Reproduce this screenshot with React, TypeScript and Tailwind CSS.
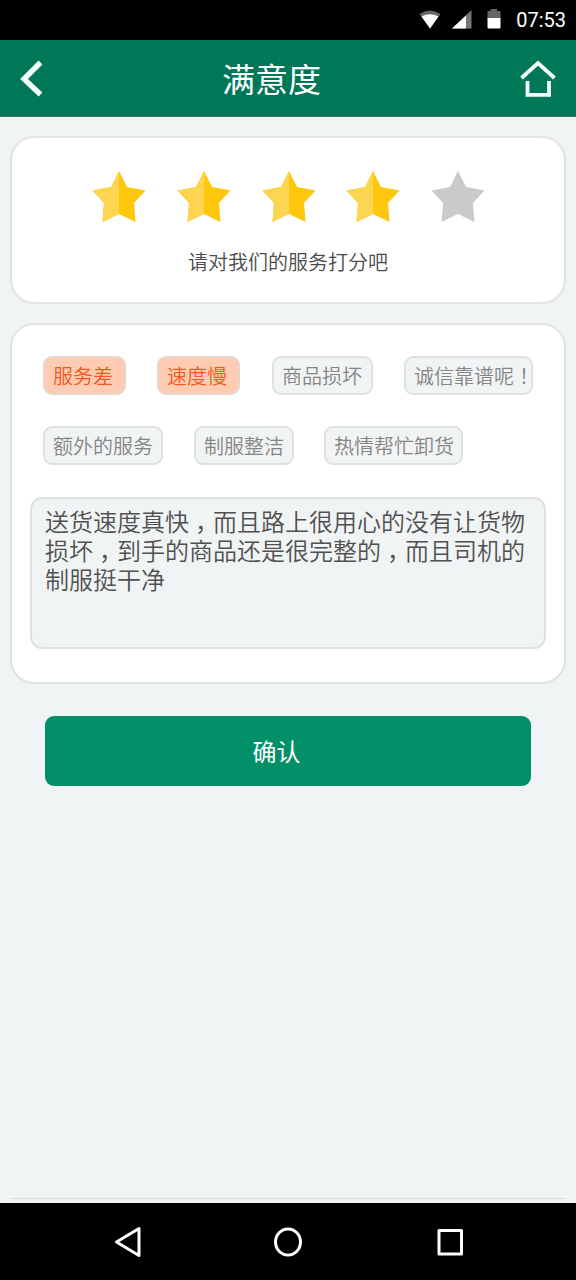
import React from 'react';

interface Tag {
  label: string;
  active?: boolean;
  className: string;
}

const tagRows: Tag[][] = [
  [
    { label: '服务差', active: true, className: 'w-[83px]' },
    { label: '速度慢', active: true, className: 'w-[83px] ml-[31px]' },
    { label: '商品损坏', className: 'w-[101px] ml-8' },
    { label: '诚信靠谱呢！', className: 'w-[129px] ml-[31px]' },
  ],
  [
    { label: '额外的服务', className: 'w-[120px]' },
    { label: '制服整洁', className: 'w-[100px] ml-[31px]' },
    { label: '热情帮忙卸货', className: 'w-[139px] ml-[30px]' },
  ],
];

const comment = '送货速度真快，而且路上很用心的没有让货物损坏，到手的商品还是很完整的，而且司机的制服挺干净';

// Half-width punctuation centred in a full-width cell
const CenteredText: React.FC<{ text: string }> = ({ text }) => (
  <>
    {text.split(/([，！])/).map((part, index) =>
      part === '，' || part === '！' ? (
        <span key={index} className="px-[0.25em] [font-feature-settings:'halt']">
          {part}
        </span>
      ) : (
        part
      )
    )}
  </>
);

const StatusBar = () => (
  <div className="h-10 bg-black flex items-center justify-end pr-[10px] text-white">
    <svg width="22" height="20" viewBox="0 0 22 20" className="mr-[11px]">
      <path d="M0.500 4Q11-3 21.500 4L11 18.500Z" fill="#666" />
      <path d="M2.500 6.500Q11 2 19.500 6.500L11 18.500Z" fill="#fff" />
    </svg>
    <svg width="20" height="20" viewBox="0 0 20 20" className="mr-[15px]">
      <path d="M19.500 0V18.500H0Z" fill="#777" />
      <path d="M14 5.500V18.500H0Z" fill="#fff" />
    </svg>
    <svg width="14" height="22" viewBox="0 0 14 22" className="mr-[15px]">
      <path d="M0.500 2H3.500V-0.500H10V2H13.500V10H0.500Z" fill="#666" />
      <path d="M0.500 9H13.500V18.500Q13.500 19.500 12.500 19.500H1.500Q0.500 19.500 0.500 18.500Z" fill="#fff" />
    </svg>
    <span className="font-['Roboto',sans-serif] text-[20px] leading-5">07:53</span>
  </div>
);

const Header = () => (
  <header className="h-[77px] bg-[#007858] border-b border-[#3c7562] flex items-center px-5 text-white">
    <svg width="36" height="38" viewBox="0 0 36 38" fill="none" stroke="#f4fffb" strokeWidth="5.400">
      <path d="M20.500 3.500L4 20L20.500 35.500" />
    </svg>
    <h1 className="flex-1 pr-[33px] text-center text-[33px] leading-none">满意度</h1>
    <svg width="36" height="38" viewBox="0 0 36 38" fill="none" stroke="#f4fffb" strokeWidth="3.800">
      <path d="M1.500 19L18 4L34.500 19" />
      <path d="M7.500 22V35.800H29V22" />
    </svg>
  </header>
);

const Star: React.FC<{ filled: boolean }> = ({ filled }) => (
  <svg width="54" height="52" viewBox="0 0 54 52">
    <path
      d="M27 0L35 16L53.500 19.500L42 32L43.500 51L27 43L10.500 51L12 32L0.500 19.500L19 16Z"
      fill={filled ? '#fec70b' : '#cacaca'}
    />
    {filled && <path d="M27 0V43L10.500 51L12 32L0.500 19.500L19 16Z" fill="#fed550" />}
  </svg>
);

const NavBar = () => (
  <nav className="h-[77px] bg-black flex items-center justify-between pl-[113px] pr-[112px]">
    <svg width="30" height="32" viewBox="0 0 30 32" fill="none" stroke="#fff" strokeWidth="3" strokeLinejoin="round">
      <path d="M26 2.500V29.500L3.500 16Z" />
    </svg>
    <svg width="30" height="32" viewBox="0 0 30 32" fill="none" stroke="#fff" strokeWidth="3">
      <ellipse cx="14" cy="16" rx="12.500" ry="13" />
    </svg>
    <svg width="30" height="32" viewBox="0 0 30 32" fill="none" stroke="#fff" strokeWidth="3" strokeLinejoin="round">
      <rect x="5" y="4.500" width="22.500" height="23.500" />
    </svg>
  </nav>
);

export default function App() {
  return (
    <div className="w-[576px] h-[1280px] bg-[#f1f4f4] flex flex-col overflow-hidden font-['Noto_Sans_CJK_SC',sans-serif]">
      <StatusBar />
      <Header />

      <main className="flex-1 flex flex-col px-[10px] pt-[19px]">
        <section className="h-[168px] bg-white border-2 border-[#e1e3e3] rounded-[24px] flex flex-col items-center pt-[33px]">
          <div className="flex gap-[30.75px] pl-px">
            {[1, 2, 3, 4, 5].map((value) => (
              <Star key={value} filled={value <= 4} />
            ))}
          </div>
          <p className="mt-[25px] text-[20px] leading-7 font-[350] text-[#4a4a4a]">请对我们的服务打分吧</p>
        </section>

        <section className="mt-[19px] h-[361px] bg-white border-2 border-[#e1e3e3] rounded-[24px] px-[18px] pt-[31px]">
          <div className="flex flex-col gap-[31px] pl-[13px]">
            {tagRows.map((row, index) => (
              <div key={index} className="flex">
                {row.map((tag) => (
                  <button
                    key={tag.label}
                    className={`${tag.className} h-[39px] shrink-0 pl-2 border-2 rounded-[9px] text-left text-[20px] leading-none font-[350] whitespace-nowrap ${
                      tag.active
                        ? 'bg-[#ffcbb3] border-[#e6d7ce] text-[#f4561b]'
                        : 'bg-[#f1f4f4] border-[#dfe1e1] text-[#858585]'
                    }`}
                  >
                    <CenteredText text={tag.label} />
                  </button>
                ))}
              </div>
            ))}
          </div>

          <div className="mt-8 h-[152px] bg-[#f1f4f4] border-2 border-[#dfe1e1] rounded-xl px-[13px] pt-[7px]">
            <p className="w-[484px] text-[24px] leading-[29px] font-[350] text-[#505050]">
              <CenteredText text={comment} />
            </p>
          </div>
        </section>

        <button className="mt-8 mx-[35px] h-[70px] shrink-0 bg-[#029068] rounded-[9px] pr-[23px] text-[24px] leading-none text-white">
          确认
        </button>

        <div className="mt-auto mb-1 h-px bg-[#dcdfdf]" />
      </main>

      <NavBar />
    </div>
  );
}
